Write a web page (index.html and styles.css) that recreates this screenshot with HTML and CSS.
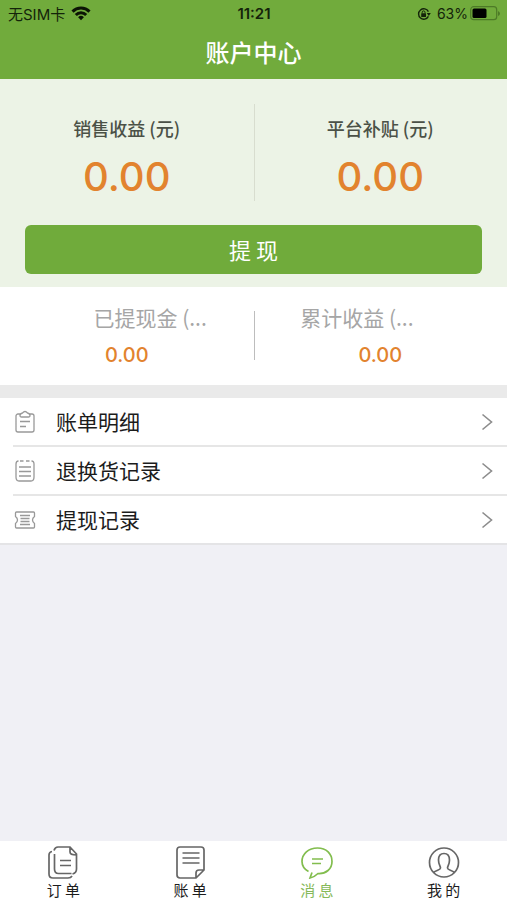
FILE: index.html
```html
<!DOCTYPE html>
<html lang="zh-CN">
<head>
<meta charset="utf-8">
<meta name="viewport" content="width=device-width, initial-scale=1">
<title>账户中心</title>
<link rel="stylesheet" href="styles.css">
</head>
<body>
<header class="header">
  <div class="status">
    <div class="status-left">
      <span>无SIM卡</span>
      <svg class="wifi" viewBox="0 0 20 15" width="20" height="15" fill="none" stroke="#0c1405" stroke-width="3"><path d="M1.5 5.6a12 12 0 0 1 17 0M4.8 9a7.3 7.3 0 0 1 10.4 0"/><path d="M10 14.2l-2.9-3a4.2 4.2 0 0 1 5.8 0z" fill="#0c1405" stroke="none"/></svg>
    </div>
    <time class="clock">11:21</time>
    <div class="status-right">
      <svg viewBox="0 0 14 14" width="14" height="14" fill="none" stroke="#14230a"><path d="M11.4 9.4A5.2 5.2 0 1 1 11.4 4.600" stroke-width="1.4"/><path d="M9.800 6h4l-2 3z" fill="#14230a" stroke="none"/><rect x="4.200" y="6.300" width="4.800" height="3.600" rx=".5" fill="#14230a" stroke="none"/><path d="M5.200 6.400V5.300a1.400 1.400 0 0 1 2.800 0v1.100"/></svg>
      <span class="percent">63%</span>
      <svg viewBox="0 0 30 15" width="30" height="15"><rect x=".7" y=".7" width="26" height="13" rx="3" fill="none" stroke="#4d7a27" stroke-width="1.2"/><rect x="2.500" y="2.500" width="14" height="9.500" rx="1.500" fill="#000"/><path d="M28 5v5q2-1 2-2.500t-2-2.500z" fill="#4d7a27"/></svg>
    </div>
  </div>
  <h1 class="title">账户中心</h1>
</header>
<main class="main">
  <section class="balance">
    <div class="balance-grid">
      <div class="balance-item"><h2 class="balance-label">销售收益 (元)</h2><p class="balance-value">0.00</p></div>
      <div class="balance-item"><h2 class="balance-label">平台补贴 (元)</h2><p class="balance-value">0.00</p></div>
    </div>
    <button class="withdraw" type="button">提 现</button>
  </section>
  <section class="totals">
    <div class="totals-labels"><span>已提现金 (...</span><span>累计收益 (...</span></div>
    <div class="totals-values"><span>0.00</span><span>0.00</span></div>
  </section>
  <nav class="menu">
    <a class="menu-item" href="#bills">
      <svg class="menu-icon" viewBox="0 0 22 24" width="22" height="24"><path d="M6 4H4a2 2 0 0 0-2 2v14a2 2 0 0 0 2 2h14a2 2 0 0 0 2-2V6a2 2 0 0 0-2-2h-2M6 5.500q0-2 2.500-2.500Q11 0 13.500 3 16 3.500 16 5.500 16 7 14.500 7h-7Q6 7 6 5.500zM6 11.500h10M6 16.500h6"/></svg>
      <span>账单明细</span>
      <svg class="chevron" viewBox="0 0 12 18" width="12" height="18"><path d="M1.500 1.500L10.500 9l-9 7.500"/></svg>
    </a>
    <a class="menu-item" href="#returns">
      <svg class="menu-icon" viewBox="0 0 22 24" width="22" height="24"><path d="M2 5v13q0 4 3 4h12q3 0 3-4V5q0-3-2.500-3M4.500 2Q2 2 2 5M6 2h3.500M12 2h3.500M5 8h12M5 12.500h12M5 17h12"/></svg>
      <span>退换货记录</span>
      <svg class="chevron" viewBox="0 0 12 18" width="12" height="18"><path d="M1.500 1.500L10.500 9l-9 7.500"/></svg>
    </a>
    <a class="menu-item" href="#withdrawals">
      <svg class="menu-icon" viewBox="0 0 22 24" width="22" height="24"><path d="M2.500 4h17q1 0 1 1v3.500q-2 1.500-2 3.500t2 3.500V19q0 1-1 1h-17q-1 0-1-1v-3.500q2-1.500 2-3.500t-2-3.500V5q0-1 1-1zM6 7.500h10M6.500 10.500h9M6.500 13.500h9M6 16.500h10"/></svg>
      <span>提现记录</span>
      <svg class="chevron" viewBox="0 0 12 18" width="12" height="18"><path d="M1.500 1.500L10.500 9l-9 7.500"/></svg>
    </a>
  </nav>
</main>
<nav class="tabs">
  <a class="tab" href="#orders">
    <svg class="tab-icon" viewBox="0 0 32 34" width="32" height="34"><path d="M7 5.500Q8 2 11 2h12l6.500 7v15q0 4-4 5M5 6.500Q2 7 2 10v19q0 4 4 4h15q3 0 4-2M7.500 9v15q0 4.500 4 4.500h13M23 2v5q0 3 6.500 3M13 15.500h11M13 20.500h11"/></svg>
    <span>订 单</span>
  </a>
  <a class="tab" href="#statement">
    <svg class="tab-icon" viewBox="0 0 32 34" width="32" height="34"><path d="M22 33H6q-3 0-3-3V5q0-3 3-3h21q3 0 3 3v20zM22 33v-5q0-3 3-3h5M8.500 8h17M8.500 13h17M8.500 18h17"/></svg>
    <span>账 单</span>
  </a>
  <a class="tab tab-active" href="#messages" aria-current="page">
    <svg class="tab-icon" viewBox="0 0 32 34" width="32" height="34"><path d="M7.500 26.500C3 24 1 20.500 1 16.500 1 9 7.500 3 16.500 3S31 9 31 16.500 25 29 17 28.500q-3.500 3.500-8 4.500l2-5.500M11 14h11M11 18.500h9"/></svg>
    <span>消 息</span>
  </a>
  <a class="tab" href="#mine">
    <svg class="tab-icon" viewBox="0 0 32 34" width="32" height="34"><circle cx="16" cy="17.500" r="14.500"/><path d="M5.500 27.500c3-2.500 7-2.500 7-4.500s-2-3.500-2-8c0-4 2-6.500 5.500-6.500s5.500 2.500 5.500 6.500c0 4.500-2 6-2 8s4 2 7 4.500"/></svg>
    <span>我 的</span>
  </a>
</nav>
</body>
</html>
```
FILE: styles.css
```css
* { box-sizing: border-box; }
body {
  display: flex;
  flex-direction: column;
  min-height: 100vh;
  margin: 0;
  background: #f0f0f5;
  color: #1c1c1c;
  font-family: Inter, "Noto Sans CJK SC", sans-serif;
}
h1, h2, p { margin: 0; }
a { color: inherit; text-decoration: none; }
svg { display: block; flex: none; }

.header { background: #71ab3c; height: 79px; }
.status {
  display: grid;
  grid-template-columns: 1fr auto 1fr;
  align-items: center;
  height: 27px;
  padding: 0 7px 0 8px;
  color: #14230a;
  font-size: 14px;
}
.status-left, .status-right { display: flex; align-items: center; gap: 6px; }
.status-left { font-size: 15px; }
.status-right { justify-content: flex-end; }
.percent { margin-right: -4px; }
.clock { font-size: 15px; font-weight: 600; }
.title {
  color: #fff;
  font-family: "Noto Sans CJK SC", sans-serif;
  font-size: 24px;
  font-weight: 500;
  line-height: 49px;
  text-align: center;
}

.balance { padding: 25px 25px 13px; background: #ecf3e6; }
.balance-grid {
  display: grid;
  grid-template-columns: 1fr 1fr;
  margin: 0 -25px 24px;
}
.balance-item { height: 97px; padding-top: 11px; text-align: center; }
.balance-item + .balance-item { box-shadow: inset 1px 0 #d8ddcf; }
.balance-label {
  color: #4b5147;
  font-family: "Noto Sans CJK SC", sans-serif;
  font-size: 18px;
  font-weight: 500;
  line-height: 26px;
}
.balance-value {
  color: #e2832e;
  font-size: 40px;
  font-weight: 500;
  line-height: 48px;
  padding-top: 12px;
}
.withdraw {
  display: block;
  width: 100%;
  height: 49px;
  padding: 0 0 2px;
  border: 0;
  border-radius: 6px;
  background: #70ab3b;
  color: #fff;
  font: 22px "Noto Sans CJK SC", sans-serif;
}

.totals { position: relative; height: 98px; padding-top: 15px; background: #fff; }
.totals::after {
  content: "";
  position: absolute;
  top: 24px;
  left: 50%;
  width: 1px;
  height: 49px;
  background: #bdbdbd;
}
.totals-labels {
  display: flex;
  justify-content: space-evenly;
  color: #a6a6a6;
  font-family: "Noto Sans CJK SC", sans-serif;
  font-size: 21px;
  line-height: 30px;
}
.totals-values {
  display: grid;
  grid-template-columns: 1fr 1fr;
  padding-top: 9px;
  color: #e2832e;
  font-size: 20px;
  font-weight: 500;
  line-height: 28px;
  text-align: center;
}

.menu {
  margin-top: 13px;
  padding-left: 13px;
  background: #fff;
  border-bottom: 2px solid #e4e4e6;
  box-shadow: 0 -13px #eaeaea;
}
.menu-item {
  display: flex;
  align-items: center;
  height: 47px;
  padding: 0 14px 0 1px;
  font-family: "Noto Sans CJK SC", sans-serif;
  font-size: 21px;
  line-height: 30px;
}
.menu-item span { padding-bottom: 2px; }
.menu-item + .menu-item { height: 49px; border-top: 2px solid #e6e6e6; }
.menu-icon { margin-right: 20px; fill: none; stroke: #999; stroke-width: 1.3; }
.chevron { margin-left: auto; fill: none; stroke: #8c8c8c; stroke-width: 1.6; }

.tabs {
  display: grid;
  grid-template-columns: repeat(4, 1fr);
  margin-top: auto;
  height: 59px;
  background: #fff;
}
.tab {
  display: flex;
  flex-direction: column;
  align-items: center;
  padding-top: 4px;
  font-family: "Noto Sans CJK SC", sans-serif;
  font-size: 15px;
  line-height: 21px;
}
.tab-icon { fill: none; stroke: #666; stroke-width: 1.7; }
.tab-active { color: #86b95a; }
.tab-active .tab-icon { stroke: #82bd4e; }
```
